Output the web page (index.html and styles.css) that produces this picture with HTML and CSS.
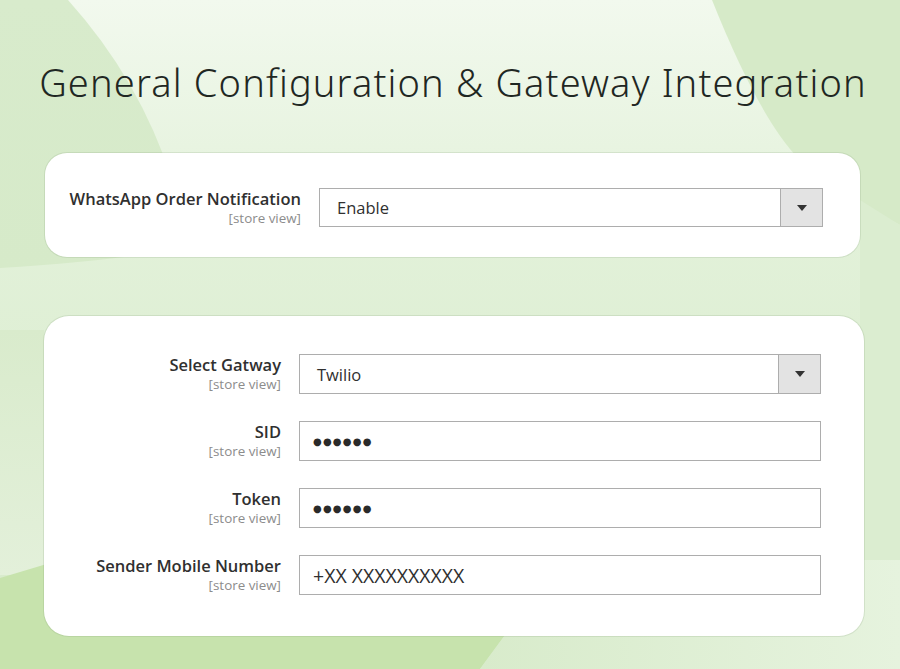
FILE: index.html
```html
<!DOCTYPE html>
<html>
<head>
<meta charset="utf-8">
<link rel="stylesheet" href="styles.css">
</head>
<body>
<div class="bg">
  <svg width="900" height="669" viewBox="0 0 900 669" xmlns="http://www.w3.org/2000/svg">
    <defs>
      <linearGradient id="base" x1="0" y1="0" x2="0" y2="1">
        <stop offset="0" stop-color="#f2f9ee"/>
        <stop offset="0.35" stop-color="#e2f1d9"/>
        <stop offset="1" stop-color="#d6eac9"/>
      </linearGradient>
      <linearGradient id="leftb" x1="0" y1="0" x2="0" y2="1">
        <stop offset="0" stop-color="#d8ebcc"/>
        <stop offset="1" stop-color="#d6eac9"/>
      </linearGradient>
      <linearGradient id="strip" x1="0" y1="0" x2="0" y2="1">
        <stop offset="0" stop-color="#d9ebcc"/>
        <stop offset="1" stop-color="#e3f0da"/>
      </linearGradient>
      <linearGradient id="br" x1="0" y1="0" x2="1" y2="0">
        <stop offset="0" stop-color="#d8ebcb"/>
        <stop offset="1" stop-color="#e6f3de"/>
      </linearGradient>
    </defs>
    <rect width="900" height="669" fill="url(#base)"/>
    <path d="M0,0 H68 Q140,80 172,180 L172,250 Q100,262 0,268 Z" fill="url(#leftb)"/>
    <path d="M0,330 H44 V575 H0 Z" fill="url(#strip)"/>
    <path d="M712,0 Q760,120 800,160 Q850,200 900,225 V0 Z" fill="#d6eac8"/>
    <path d="M860,200 L900,225 V669 H860 Z" fill="#dbedd0"/>
    <path d="M0,578 L60,560 L560,560 L480,669 H0 Z" fill="#c7e3ad"/>
    <path d="M560,560 H900 V669 H480 Z" fill="url(#br)"/>
  </svg>
</div>

<h1 class="title">General Configuration &amp; Gateway Integration</h1>

<section class="card card-one">
  <div class="row row-one">
    <div class="label">
      <span class="name">WhatsApp Order Notification</span>
      <span class="scope">[store view]</span>
    </div>
    <div class="select">
      <span class="value">Enable</span>
      <span class="arrow"><span class="tri"></span></span>
    </div>
  </div>
</section>

<section class="card card-two">
  <div class="row row-two">
    <div class="label">
      <span class="name">Select Gatway</span>
      <span class="scope">[store view]</span>
    </div>
    <div class="select">
      <span class="value">Twilio</span>
      <span class="arrow"><span class="tri"></span></span>
    </div>
  </div>
  <div class="row row-two">
    <div class="label">
      <span class="name">SID</span>
      <span class="scope">[store view]</span>
    </div>
    <div class="input"><span class="dots">●●●●●●</span></div>
  </div>
  <div class="row row-two">
    <div class="label">
      <span class="name">Token</span>
      <span class="scope">[store view]</span>
    </div>
    <div class="input"><span class="dots">●●●●●●</span></div>
  </div>
  <div class="row row-two">
    <div class="label">
      <span class="name">Sender Mobile Number</span>
      <span class="scope">[store view]</span>
    </div>
    <div class="input"><span class="text">+XX XXXXXXXXXX</span></div>
  </div>
</section>
</body>
</html>
```

FILE: styles.css
```css
html, body {
  margin: 0;
  padding: 0;
}
body {
  width: 900px;
  height: 669px;
  overflow: hidden;
  position: relative;
  font-family: "Open Sans", "Noto Sans", sans-serif;
  color: #303030;
  display: flex;
  flex-direction: column;
}
.bg {
  position: absolute;
  left: 0;
  top: 0;
  z-index: 0;
  line-height: 0;
}
.title, .card {
  position: relative;
  z-index: 1;
}
.title {
  margin: 56px 0 0 0;
  padding-left: 6px;
  height: 97px;
  text-align: center;
  font-family: "Noto Sans", sans-serif;
  font-weight: 350;
  font-size: 38px;
  line-height: 52px;
  color: #1f2723;
  letter-spacing: 1.15px;
}
.card {
  background: #ffffff;
  box-shadow: 0 0 0 1px rgba(120, 150, 110, 0.18);
}
.card-one {
  margin-left: 45px;
  width: 815px;
  height: 104px;
  border-radius: 22px;
  box-sizing: border-box;
  padding-top: 35px;
}
.card-two {
  margin-left: 44px;
  margin-top: 59px;
  width: 820px;
  height: 320px;
  border-radius: 25px;
  box-sizing: border-box;
  padding-top: 38px;
  display: flex;
  flex-direction: column;
  gap: 27px;
}
.row {
  display: grid;
  column-gap: 18px;
  align-items: start;
}
.row-one {
  grid-template-columns: 256px 504px;
}
.row-two {
  grid-template-columns: 237px 522px;
}
.label {
  display: flex;
  flex-direction: column;
  align-items: flex-end;
  text-align: right;
  padding-top: 1px;
}
.name {
  font-weight: 600;
  font-size: 16.5px;
  line-height: 19px;
  color: #303030;
  white-space: nowrap;
}
.scope {
  margin-top: 3px;
  font-size: 13.4px;
  line-height: 15px;
  color: #8c8c8c;
  white-space: nowrap;
}
.select, .input {
  box-sizing: border-box;
  height: 40px;
  border: 1px solid #adadad;
  background: #fff;
  display: flex;
  align-items: center;
}
.row-one .select {
  height: 39px;
}
.value {
  flex: 1;
  padding-left: 17px;
  font-size: 16.5px;
  color: #303030;
}
.arrow {
  width: 41px;
  align-self: stretch;
  background: #e3e3e3;
  border-left: 1px solid #adadad;
  display: flex;
  align-items: center;
  justify-content: center;
}
.tri {
  width: 0;
  height: 0;
  border-left: 5px solid transparent;
  border-right: 5px solid transparent;
  border-top: 6px solid #333;
}
.input {
  padding-left: 13px;
}
.dots {
  font-family: "DejaVu Sans", sans-serif;
  font-size: 10px;
  letter-spacing: 1.2px;
  color: #2a2a2a;
}
.text {
  font-size: 19.5px;
  color: #303030;
}
```
